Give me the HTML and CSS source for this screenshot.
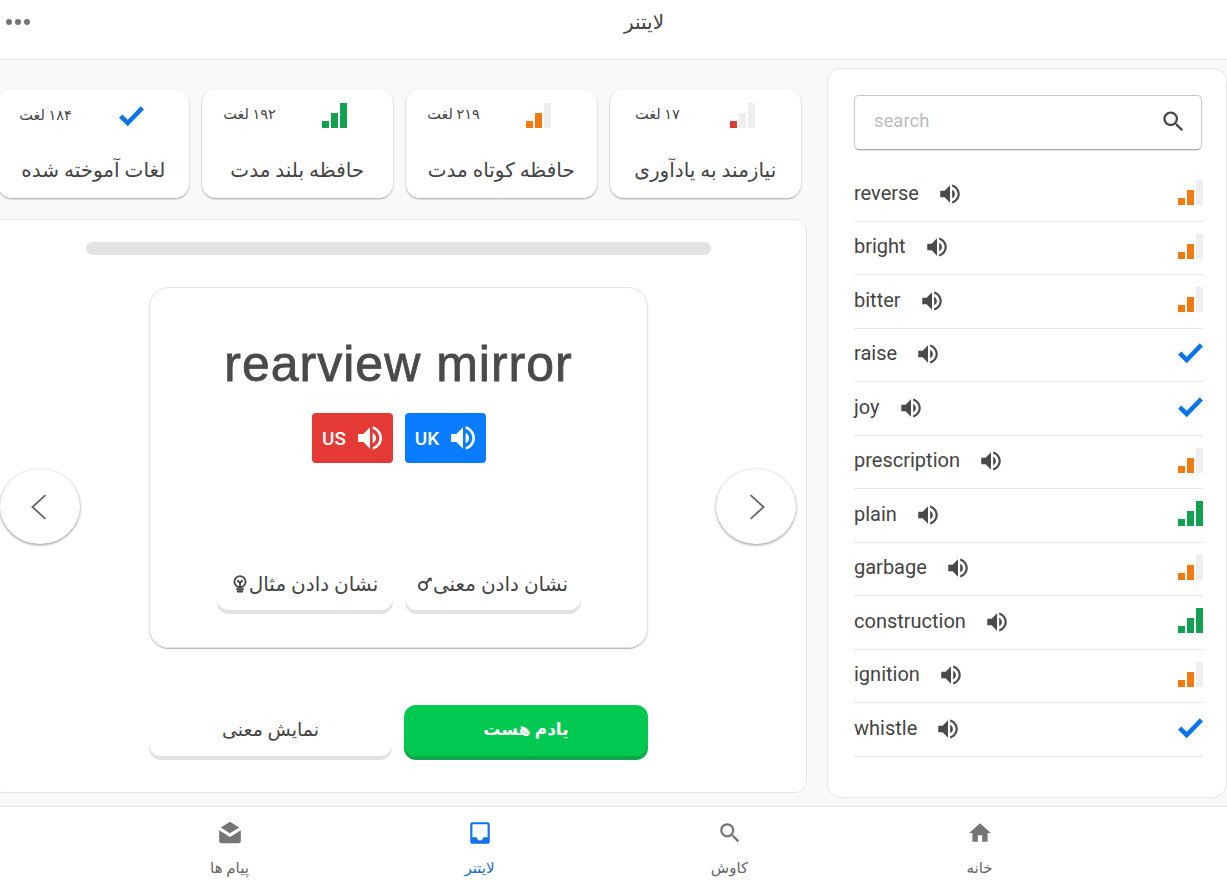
FILE: index.html
```html
<!DOCTYPE html>
<html lang="fa">
<head>
    <meta charset="UTF-8">
    <meta name="viewport" content="width=device-width, initial-scale=1.0">
    <title>لایتنر</title>
    <link rel="stylesheet" href="styles.css">
</head>
<body>
    <svg class="sprite" width="0" height="0">
        <symbol id="i-sound" viewBox="0 0 24 24"><path d="M3 9v6h4l5 5V4L7 9H3zm13.5 3c0-1.77-1.02-3.29-2.5-4.03v8.05c1.48-.73 2.5-2.25 2.5-4.02zM14 3.23v2.06c2.89.86 5 3.54 5 6.71s-2.11 5.85-5 6.71v2.06c4.01-.91 7-4.49 7-8.77s-2.99-7.86-7-8.77z"/></symbol>
        <symbol id="i-search" viewBox="0 0 24 24"><path d="M15.5 14h-.79l-.28-.27C15.41 12.59 16 11.11 16 9.5 16 5.91 13.09 3 9.5 3S3 5.91 3 9.5 5.91 16 9.5 16c1.61 0 3.09-.59 4.23-1.57l.27.28v.79l5 4.99L20.49 19l-4.99-5zm-6 0C7.01 14 5 11.99 5 9.5S7.01 5 9.5 5 14 7.01 14 9.5 11.99 14 9.5 14z"/></symbol>
        <symbol id="i-check" viewBox="0 0 24 24"><path d="M1 13.5l3-3 5 5L21 3l3 3L9 21.5z"/></symbol>
    </svg>

    <div class="app">
        <header class="topbar">
            <div class="dots"><span></span><span></span><span></span></div>
            <h1>لایتنر</h1>
        </header>

        <main class="main">
            <aside class="words">
                <div class="search-box">
                    <span class="placeholder">search</span>
                    <svg class="search-icon"><use href="#i-search"/></svg>
                </div>
                <ul class="word-list">
                    <li><span class="word">reverse</span><svg class="sound"><use href="#i-sound"/></svg><span class="bars orange two"><i></i><i></i><i></i></span></li>
                    <li><span class="word">bright</span><svg class="sound"><use href="#i-sound"/></svg><span class="bars orange two"><i></i><i></i><i></i></span></li>
                    <li><span class="word">bitter</span><svg class="sound"><use href="#i-sound"/></svg><span class="bars orange two"><i></i><i></i><i></i></span></li>
                    <li><span class="word">raise</span><svg class="sound"><use href="#i-sound"/></svg><svg class="check"><use href="#i-check"/></svg></li>
                    <li><span class="word">joy</span><svg class="sound"><use href="#i-sound"/></svg><svg class="check"><use href="#i-check"/></svg></li>
                    <li><span class="word">prescription</span><svg class="sound"><use href="#i-sound"/></svg><span class="bars orange two"><i></i><i></i><i></i></span></li>
                    <li><span class="word">plain</span><svg class="sound"><use href="#i-sound"/></svg><span class="bars green three"><i></i><i></i><i></i></span></li>
                    <li><span class="word">garbage</span><svg class="sound"><use href="#i-sound"/></svg><span class="bars orange two"><i></i><i></i><i></i></span></li>
                    <li><span class="word">construction</span><svg class="sound"><use href="#i-sound"/></svg><span class="bars green three"><i></i><i></i><i></i></span></li>
                    <li><span class="word">ignition</span><svg class="sound"><use href="#i-sound"/></svg><span class="bars orange two"><i></i><i></i><i></i></span></li>
                    <li><span class="word">whistle</span><svg class="sound"><use href="#i-sound"/></svg><svg class="check"><use href="#i-check"/></svg></li>
                </ul>
            </aside>

            <section class="study">
                <div class="stats">
                    <div class="stat">
                        <div class="stat-top"><span class="count">۱۷ لغت</span><span class="bars red one"><i></i><i></i><i></i></span></div>
                        <div class="stat-title">نیازمند به یادآوری</div>
                    </div>
                    <div class="stat">
                        <div class="stat-top"><span class="count">۲۱۹ لغت</span><span class="bars orange two"><i></i><i></i><i></i></span></div>
                        <div class="stat-title">حافظه کوتاه مدت</div>
                    </div>
                    <div class="stat">
                        <div class="stat-top"><span class="count">۱۹۲ لغت</span><span class="bars green three"><i></i><i></i><i></i></span></div>
                        <div class="stat-title">حافظه بلند مدت</div>
                    </div>
                    <div class="stat">
                        <div class="stat-top"><span class="count">۱۸۴ لغت</span><svg class="check"><use href="#i-check"/></svg></div>
                        <div class="stat-title">لغات آموخته شده</div>
                    </div>
                </div>

                <div class="panel">
                    <div class="progress"></div>
                    <div class="stage">
                        <button class="nav"><svg viewBox="0 0 24 24"><polyline points="17,1 5,12 17,23"/></svg></button>
                        <div class="flashcard">
                            <h2>rearview mirror</h2>
                            <div class="accents">
                                <button class="accent us">US<svg><use href="#i-sound"/></svg></button>
                                <button class="accent uk">UK<svg><use href="#i-sound"/></svg></button>
                            </div>
                            <div class="hints">
                                <button class="soft-btn">نشان دادن مثال<svg class="hint-icon bulb" viewBox="0 0 24 24"><circle cx="12" cy="9" r="7.5"/><path d="M8.5 7l3.5 3.5L15.5 7M12 10.5V17M7 19h10M8 22h8"/></svg></button>
                                <button class="soft-btn">نشان دادن معنی<svg class="hint-icon key" viewBox="0 0 24 24"><circle cx="9" cy="15" r="6"/><path d="M13.5 10.5L21 3"/><path class="key-head" d="M16 3h6v6z"/></svg></button>
                            </div>
                        </div>
                        <button class="nav"><svg viewBox="0 0 24 24"><polyline points="7,1 19,12 7,23"/></svg></button>
                    </div>
                    <div class="answers">
                        <button class="answer soft-btn">نمایش معنی</button>
                        <button class="answer known">یادم هست</button>
                    </div>
                </div>
            </section>
        </main>

        <nav class="tabs">
            <a class="tab"><svg viewBox="0 0 24 24"><path d="M10 20v-6h4v6h5v-8h3L12 3 2 12h3v8z"/></svg>خانه</a>
            <a class="tab"><svg viewBox="0 0 24 24"><use href="#i-search"/></svg>کاوش</a>
            <a class="tab active"><svg viewBox="0 0 24 24"><path d="M19 2H5c-1.1 0-2 .9-2 2v16c0 1.1.9 2 2 2h14c1.1 0 2-.9 2-2V4c0-1.1-.9-2-2-2zm0 14h-4c0 1.66-1.35 3-3 3s-3-1.34-3-3H5V4h14v12z"/></svg>لایتنر</a>
            <a class="tab"><svg viewBox="0 0 24 24"><path d="M12 1.500L3.500 7l8.500 5.200L20.500 7z"/><path d="M2 9.500l10 6.200 10-6.200V19.500a2 2 0 0 1-2 2H4a2 2 0 0 1-2-2z"/></svg>پیام ها</a>
        </nav>
    </div>
</body>
</html>
```

FILE: styles.css
```css
* {
    margin: 0;
    padding: 0;
    box-sizing: border-box;
}

html, body {
    height: 100%;
    overflow: hidden;
}

body {
    font-family: Roboto, "DejaVu Sans", sans-serif;
    color: #444;
    background: #fff;
}

button {
    font-family: inherit;
    border: none;
    background: none;
}

.sprite {
    display: block;
}

.app {
    height: 882px;
    display: flex;
    flex-direction: column;
}

/* top bar */
.topbar {
    height: 60px;
    flex-shrink: 0;
    border-bottom: 1px solid #e2e2e2;
    display: flex;
    align-items: center;
    padding: 0 0 16px 6px;
}

.topbar h1 {
    flex: 1;
    text-align: center;
    font-size: 20px;
    font-weight: 400;
    margin-left: 31px;
    margin-top: 1px;
}

.dots {
    display: flex;
    gap: 3px;
}

.dots span {
    width: 6px;
    height: 6px;
    border-radius: 50%;
    background: #757575;
}

/* main area, right to left so the study column runs off the left edge */
.main {
    flex: 1;
    background: #f9f9f9;
    display: flex;
    direction: rtl;
    gap: 20px;
    min-height: 0;
}

.words {
    width: 400px;
    flex-shrink: 0;
    height: 730px;
    margin-top: 8px;
    background: #fff;
    border: 1px solid #e6e6e6;
    border-radius: 14px;
    padding: 26px 23px 0 26px;
    direction: ltr;
}

.search-box {
    height: 55px;
    margin-right: 1px;
    border: 1px solid #c9c9c9;
    border-bottom-color: #aaa;
    border-radius: 5px;
    display: flex;
    align-items: center;
    justify-content: space-between;
    padding: 0 14px 2px 19px;
    box-shadow: 0 1px 1px rgba(0,0,0,0.12);
}

.placeholder {
    font-size: 18.500px;
    color: #bbb;
    padding-bottom: 1px;
}

.search-icon {
    width: 27px;
    height: 27px;
    fill: #444;
}

.word-list {
    list-style: none;
    margin-top: 18px;
}

.word-list li {
    height: 53.500px;
    border-bottom: 1px solid #e6e6e6;
    display: flex;
    align-items: center;
    font-size: 20px;
    padding-bottom: 3px;
}

.word {
    margin-right: 18px;
}

.sound {
    width: 26px;
    height: 26px;
    fill: #4a4a4a;
    margin-top: 2px;
}

.word-list .bars, .word-list .check {
    margin-left: auto;
}

.bars {
    display: flex;
    align-items: flex-end;
    direction: ltr;
    gap: 2px;
    height: 25px;
}

.bars i {
    width: 7px;
    background: #eee;
}

.bars i:nth-child(1) { height: 7px; }
.bars i:nth-child(2) { height: 15px; }
.bars i:nth-child(3) { height: 25px; }

.bars.red.one i:nth-child(1) { background: #e03a35; }
.bars.orange.two i:nth-child(-n+2) { background: #f27a12; }
.bars.green.three i { background: #12a150; }

.check {
    width: 26px;
    height: 26px;
    fill: #0d74e8;
}

/* study column */
.study {
    width: 817px;
    flex-shrink: 0;
}

.stats {
    display: flex;
    gap: 12.500px;
    margin: 29px 6px 0 0;
    height: 109px;
}

.stat {
    width: 191.500px;
    flex-shrink: 0;
    background: #fff;
    border-radius: 14px;
    box-shadow: 0 1px 2px rgba(0,0,0,0.35);
}

.stat-top {
    direction: ltr;
    display: grid;
    grid-template-columns: 96px 74px;
    align-items: center;
    justify-items: center;
    height: 25px;
    margin-top: 14px;
    font-size: 14.500px;
}

.count {
    direction: rtl;
    white-space: nowrap;
    padding-bottom: 2px;
}

.stat-title {
    text-align: center;
    font-size: 20px;
    margin-top: 30px;
    line-height: 24px;
    white-space: nowrap;
}

.panel {
    margin-top: 21px;
    height: 574px;
    background: #fff;
    border: 1px solid #e6e6e6;
    border-radius: 12px;
    direction: ltr;
    padding: 22px 9px 0 9px;
}

.progress {
    width: 625px;
    height: 13px;
    margin-left: 86px;
    background: #e3e3e3;
    border-radius: 7px;
}

.stage {
    display: flex;
    align-items: flex-start;
    margin-top: 32px;
}

.nav {
    width: 80px;
    height: 75px;
    flex-shrink: 0;
    margin-top: 182px;
    border-radius: 50%;
    background: #fff;
    box-shadow: 0 1px 3px rgba(0,0,0,0.45);
    display: flex;
    align-items: center;
    justify-content: center;
}

.nav svg {
    width: 26px;
    height: 26px;
    fill: none;
    stroke: #666;
    stroke-width: 1.700;
}

.flashcard {
    width: 499px;
    height: 361px;
    flex-shrink: 0;
    margin: 0 68px 0 69px;
    border: 1px solid #e3e3e3;
    border-radius: 20px;
    box-shadow: 0 1px 1px rgba(0,0,0,0.3);
    text-align: center;
    padding-top: 48px;
}

.flashcard h2 {
    font-family: "Liberation Sans", sans-serif;
    font-size: 50px;
    font-weight: 400;
    line-height: 56px;
    letter-spacing: 1px;
    color: #4a4a4a;
    -webkit-text-stroke: 0.8px #4a4a4a;
}

.accents {
    display: flex;
    justify-content: center;
    gap: 12px;
    margin-top: 21px;
}

.accent {
    width: 81px;
    height: 50px;
    border-radius: 4px;
    color: #fff;
    font-size: 19px;
    font-weight: 500;
    display: flex;
    align-items: center;
    justify-content: center;
    gap: 8px;
    padding-left: 4px;
}

.accent svg {
    width: 32px;
    height: 32px;
    fill: #fff;
}

.accent.us { background: #e53935; }
.accent.uk { background: #0a7cff; }

.hints {
    display: flex;
    justify-content: center;
    gap: 12px;
    margin-top: 94px;
}

.soft-btn {
    width: 176px;
    height: 53px;
    background: #fff;
    border-radius: 12px;
    color: #444;
    font-size: 20px;
    box-shadow: 0 4px 0 #e3e3e3;
    direction: rtl;
    display: flex;
    align-items: center;
    justify-content: center;
    white-space: nowrap;
}

.hint-icon {
    fill: none;
    stroke: #444;
    stroke-width: 2.400;
    flex-shrink: 0;
}

.hint-icon.bulb {
    width: 18px;
    height: 22px;
}

.hint-icon.key {
    width: 16px;
    height: 16px;
    stroke-width: 3;
}

.key-head {
    fill: #444;
    stroke: none;
}

.answers {
    display: flex;
    gap: 12px;
    margin: 57px 0 0 149px;
}

.answers button {
    width: 243px;
    height: 51px;
    padding-bottom: 3px;
    font-size: 19px;
    justify-content: center;
}

.answers .known {
    width: 244px;
    background: #00c851;
    color: #fff;
    font-size: 17px;
    font-weight: 700;
    border-radius: 12px;
    box-shadow: 0 4px 0 #0ba74a;
}

/* bottom tabs */
.tabs {
    height: 76px;
    flex-shrink: 0;
    border-top: 1px solid #e2e2e2;
    background: #fff;
    display: flex;
    flex-direction: row-reverse;
    justify-content: center;
    padding-right: 18px;
}

.tab {
    width: 250px;
    display: flex;
    flex-direction: column;
    align-items: center;
    font-size: 15px;
    color: #666;
    padding-top: 13px;
    gap: 13px;
}

.tab svg {
    width: 26px;
    height: 26px;
    fill: #757575;
}

.tab.active {
    color: #1a6fd0;
}

.tab.active svg {
    fill: #1273e6;
}
```
